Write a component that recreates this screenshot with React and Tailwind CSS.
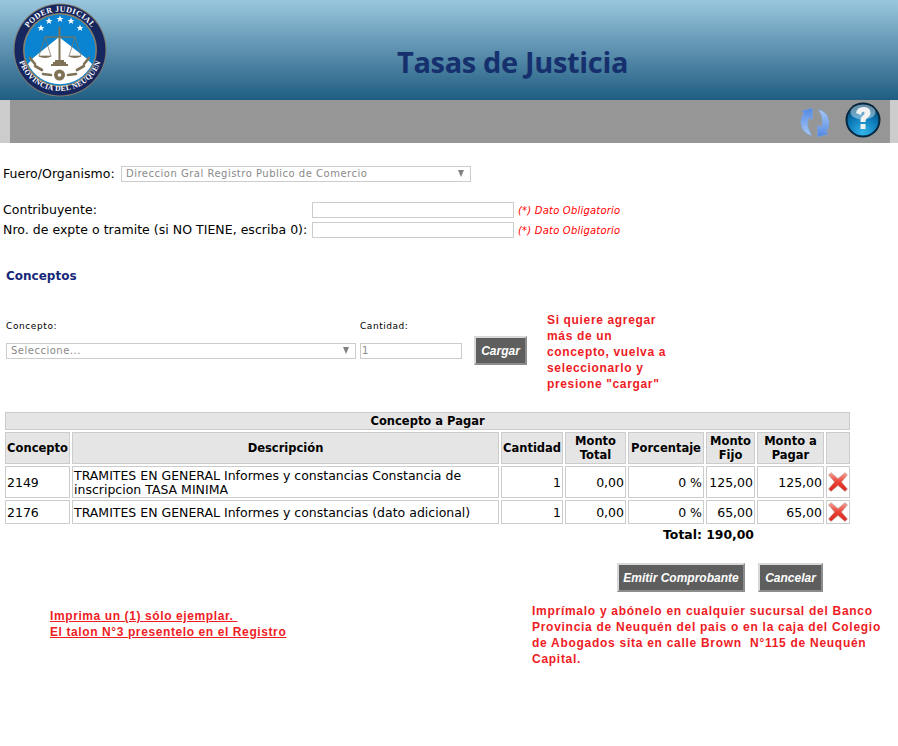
import React from 'react';

const verdana = "font-['DejaVu_Sans',Verdana,sans-serif]";

function Logo() {
  return (
    <svg width="96" height="96" viewBox="0 0 96 96" className="block">
      <defs>
        <path id="arcTop" d="M 9.5 48 A 38.5 38.5 0 0 1 86.5 48" />
        <path id="arcBottom" d="M 5 46 A 43 43 0 0 0 91 46" />
      </defs>
      <circle cx="48" cy="48" r="46.5" fill="#7f7a6c" />
      <circle cx="48" cy="48" r="45.5" fill="#16265f" />
      <circle cx="48" cy="48" r="37" fill="#8a8069" />
      <circle cx="48" cy="48" r="35.5" fill="#0a84d0" />
      <path d="M47 35 L 74 56 L 80 62 A 35.5 35.5 0 0 1 16 62 L 21 56 Z" fill="#fff" />
      {[[29, 26], [37, 19], [48, 17], [59, 19], [68, 26]].map(([x, y]) => (
        <path
          key={x}
          transform={`translate(${x} ${y})`}
          d="M0 -3.4 L1 -1 L3.4 -1 L1.5 .6 L2.2 3 L0 1.6 L-2.2 3 L-1.5 .6 L-3.4 -1 L-1 -1 Z"
          fill="#fff"
        />
      ))}
      <g stroke="#7f7257" fill="none">
        <path d="M47.5 25 V60" strokeWidth="2" />
        <path d="M33 35 H63" strokeWidth="1.2" />
        <path d="M33 35 L27 54 H39 Z M63 35 L57 54 H69 Z" strokeWidth="0.7" />
      </g>
      <path d="M26 54 H40 Q33 58 26 54 Z M56 54 H70 Q63 58 56 54 Z M43 58 H52 V60 H54 V62 H56 V64 H39 V62 H41 V60 H43 Z" fill="#7f7257" />
      <g stroke="#7f7257" strokeWidth="2.6" strokeLinecap="round" fill="none">
        <path d="M18 56 L23 62 M23 64 L30 68 M31 72 L39 73" />
        <path d="M77 56 L72 62 M72 64 L65 68 M64 72 L56 73" />
      </g>
      <circle cx="47.5" cy="73" r="5.5" fill="#7f7257" />
      <circle cx="47.5" cy="73" r="1.8" fill="#fff" />
      <text fontFamily="'Liberation Serif', serif" fontSize="8" fontWeight="700" fill="#fff" letterSpacing="0.4">
        <textPath href="#arcTop" startOffset="50%" textAnchor="middle">PODER JUDICIAL</textPath>
      </text>
      <text fontFamily="'Liberation Serif', serif" fontSize="7.6" fontWeight="700" fill="#fff" letterSpacing="0.3">
        <textPath href="#arcBottom" startOffset="50%" textAnchor="middle">PROVINCIA DEL NEUQUEN</textPath>
      </text>
    </svg>
  );
}

function RefreshIcon() {
  const arc = 'M12.5 0 L12.5 12 L9 9.5 Q5.5 17 11.5 27.5 Q2 25 0.8 15 Q0.8 9 4 5 L1.5 3 Z';
  return (
    <svg width="30" height="29" viewBox="0 0 30 29" className="block">
      <defs>
        <linearGradient id="refreshFill" x1="0" y1="0" x2="0" y2="1">
          <stop offset="0" stopColor="#5288e2" />
          <stop offset="1" stopColor="#a9c9f5" />
        </linearGradient>
      </defs>
      <path d={arc} fill="url(#refreshFill)" stroke="#7ba4e2" strokeWidth="0.5" />
      <path d={arc} transform="rotate(180 15 14.5)" fill="url(#refreshFill)" stroke="#7ba4e2" strokeWidth="0.5" />
    </svg>
  );
}

function HelpIcon() {
  return (
    <svg width="36" height="36" viewBox="0 0 36 36" className="block">
      <defs>
        <radialGradient id="helpFill" cx="0.5" cy="0.9" r="0.85">
          <stop offset="0" stopColor="#35b4ea" />
          <stop offset="0.6" stopColor="#0c7ab8" />
          <stop offset="1" stopColor="#064a74" />
        </radialGradient>
      </defs>
      <circle cx="18" cy="18" r="17.5" fill="#04263e" />
      <circle cx="18" cy="18" r="15.5" fill="url(#helpFill)" />
      <ellipse cx="18" cy="10" rx="12.5" ry="7.5" fill="#fff" opacity="0.4" />
      <path d="M11 11 Q12 5 18.5 5 Q25 5 25.5 10.5 Q25.5 14 22 16 Q20.5 17 20.5 20 H15.5 Q15 15.5 18 13.5 Q20 12 19.5 10.5 Q18.5 9 16.5 11 L16 13 Z" fill="#f2f2f2" />
      <rect x="15.5" y="22" width="5" height="5" fill="#f2f2f2" />
    </svg>
  );
}

function DeleteIcon() {
  return (
    <svg width="20" height="20" viewBox="0 0 20 20" className="block">
      <defs>
        <linearGradient id="deleteFill" x1="0" y1="0" x2="0" y2="1">
          <stop offset="0" stopColor="#f6a396" />
          <stop offset="0.5" stopColor="#ec4034" />
          <stop offset="1" stopColor="#d8261e" />
        </linearGradient>
      </defs>
      <path
        d="M3 0.5 L10 6.5 L17 0.5 L19.5 3 L13.5 10 L19.5 17 L17 19.5 L10 13.5 L3 19.5 L0.5 17 L6.5 10 L0.5 3 Z"
        fill="url(#deleteFill)"
        stroke="#b5b0ae"
        strokeWidth="0.6"
      />
    </svg>
  );
}

function Arrow() {
  return <span className="absolute right-[6px] top-[3px] w-0 h-0 border-x-[3.5px] border-x-transparent border-t-[7px] border-t-[#808080]" />;
}

function GrayButton({ children, className }) {
  return (
    <button
      className={`h-[29px] bg-[#5e5e5e] border-2 border-t-[#d8d8d8] border-l-[#d8d8d8] border-r-[#8c8c8c] border-b-[#8c8c8c] text-white text-[12px] font-bold italic font-['Liberation_Sans',Arial,sans-serif] ${className}`}
    >
      {children}
    </button>
  );
}

function Required() {
  return <span className="ml-1 text-[10px] italic text-[#ff0000] tracking-[0.2px]">(*) Dato Obligatorio</span>;
}

const th = 'border border-[#cccccc] bg-[#e5e5e5] font-bold text-center text-black px-px leading-[14px]';
const td = 'border border-[#cccccc] px-px pt-px align-middle leading-[14px]';

const rows = [
  { code: '2149', desc: 'TRAMITES EN GENERAL Informes y constancias Constancia de inscripcion TASA MINIMA', fijo: '125,00', h: 'h-[32px]' },
  { code: '2176', desc: 'TRAMITES EN GENERAL Informes y constancias (dato adicional)', fijo: '65,00', h: 'h-[24px]' },
];

function App() {
  return (
    <div className={`w-[898px] h-[746px] bg-white text-black overflow-hidden ${verdana}`}>
      {/* Header */}
      <header className="h-[100px] bg-gradient-to-b from-[#9ac7de] to-[#1e5e82] flex items-start pl-[12px] pt-[2px]">
        <Logo />
        <h1 className="ml-[289px] mt-[43px] text-[29px] leading-[34px] font-bold text-[#16306e] font-['Open_Sans',sans-serif] tracking-[-0.35px]">
          Tasas de Justicia
        </h1>
      </header>

      {/* Toolbar */}
      <div className="h-[43px] bg-[#969696] border-l-[10px] border-r-[8px] border-[#cccccc] flex items-start justify-end gap-[15px] pr-[9px] pt-[2px]">
        <div className="mt-[6px]"><RefreshIcon /></div>
        <HelpIcon />
      </div>

      {/* Fuero */}
      <div className="mt-[23px] pl-[3px] flex items-center h-[16px] text-[12.5px] tracking-[0.03px]">
        <span className="w-[118px] pt-px">Fuero/Organismo:</span>
        <div className="relative w-[350px] h-[16px] border border-[#cccccc] text-[10px] leading-[14px] pl-[4px] text-[#8a8a8a] tracking-[0.5px]">
          Direccion Gral Registro Publico de Comercio
          <Arrow />
        </div>
      </div>

      {/* Datos */}
      <div className="mt-[20px] pl-[3px] flex flex-col gap-[4px] text-[12.5px] tracking-[0.03px]">
        {['Contribuyente:', 'Nro. de expte o tramite (si NO TIENE, escriba 0):'].map((label) => (
          <div key={label} className="flex items-center h-[16px]">
            <span className="w-[309px] whitespace-nowrap pt-px">{label}</span>
            <div className="w-[202px] h-[16px] border border-[#cccccc]" />
            <Required />
          </div>
        ))}
      </div>

      <h2 className="mt-[30px] pl-[6px] text-[12px] leading-[16px] font-bold text-[#16287a]">Conceptos</h2>

      {/* Carga de conceptos */}
      <div className="mt-[28px] pl-[6px] flex items-start">
        <div className="w-[354px] pt-[8px]">
          <div className="text-[9px] leading-[12px] tracking-[0.6px]">Concepto:</div>
          <div className="relative mt-[11px] w-[350px] h-[16px] border border-[#cccccc] text-[10px] leading-[14px] pl-[4px] text-[#8a8a8a] tracking-[0.5px]">
            Seleccione...
            <Arrow />
          </div>
        </div>
        <div className="w-[114px] pt-[8px]">
          <div className="text-[9px] leading-[12px] tracking-[0.55px]">Cantidad:</div>
          <div className="mt-[11px] w-[102px] h-[16px] border border-[#cccccc] text-[10px] leading-[14px] pl-[1px] text-[#8a8a8a]">1</div>
        </div>
        <GrayButton className="w-[53px] mt-[24px]">Cargar</GrayButton>
        <p className="ml-[20px] w-[125px] text-[12px] leading-[16px] font-bold text-[#ee1c25] font-['Liberation_Sans',Arial,sans-serif] tracking-[0.65px]">
          Si quiere agregar más de un concepto, vuelva a seleccionarlo y presione "cargar"
        </p>
      </div>

      {/* Tabla */}
      <table className="mt-[18px] ml-[3px] w-[849px] table-fixed border-separate border-spacing-[2px] text-[12.5px]">
        <colgroup>
          <col className="w-[65px]" />
          <col className="w-[427px]" />
          <col className="w-[62px]" />
          <col className="w-[61px]" />
          <col className="w-[76px]" />
          <col className="w-[49px]" />
          <col className="w-[67px]" />
          <col className="w-[24px]" />
        </colgroup>
        <thead className="text-[11.5px]">
          <tr className="h-[18px]">
            <th colSpan={8} className={th}>Concepto a Pagar</th>
          </tr>
          <tr className="h-[32px]">
            <th className={th}>Concepto</th>
            <th className={th}>Descripción</th>
            <th className={th}>Cantidad</th>
            <th className={th}>Monto Total</th>
            <th className={th}>Porcentaje</th>
            <th className={th}>Monto Fijo</th>
            <th className={th}>Monto a Pagar</th>
            <th className={th} />
          </tr>
        </thead>
        <tbody>
          {rows.map((row) => (
            <tr key={row.code} className={row.h}>
              <td className={td}>{row.code}</td>
              <td className={td}>{row.desc}</td>
              <td className={`${td} text-right`}>1</td>
              <td className={`${td} text-right`}>0,00</td>
              <td className={`${td} text-right`}>0 %</td>
              <td className={`${td} text-right`}>{row.fijo}</td>
              <td className={`${td} text-right`}>{row.fijo}</td>
              <td className="border border-[#cccccc] p-0"><div className="flex justify-center"><DeleteIcon /></div></td>
            </tr>
          ))}
        </tbody>
      </table>

      <div className="w-[754px] mt-[2px] text-right text-[12.4px] leading-[14px] font-bold">Total: 190,00</div>

      {/* Acciones */}
      <div className="mt-[21px] pl-[617px] flex gap-[13px]">
        <GrayButton className="w-[128px]">Emitir Comprobante</GrayButton>
        <GrayButton className="w-[65px]">Cancelar</GrayButton>
      </div>

      {/* Notas */}
      <div className="mt-[11px] flex items-start text-[12px] leading-[16px] font-bold text-[#ee1c25] font-['Liberation_Sans',Arial,sans-serif]">
        <p className="ml-[50px] w-[482px] mt-[5px] underline tracking-[0.6px]">
          Imprima un (1) sólo ejemplar.&nbsp;<br />El talon N°3 presentelo en el Registro
        </p>
        <p className="w-[360px] tracking-[0.72px]">
          Imprímalo y abónelo en cualquier sucursal del Banco Provincia de Neuquén del pais o en la caja del Colegio de Abogados sita en calle Brown&nbsp; N°115 de Neuquén Capital.
        </p>
      </div>
    </div>
  );
}

export default App;
